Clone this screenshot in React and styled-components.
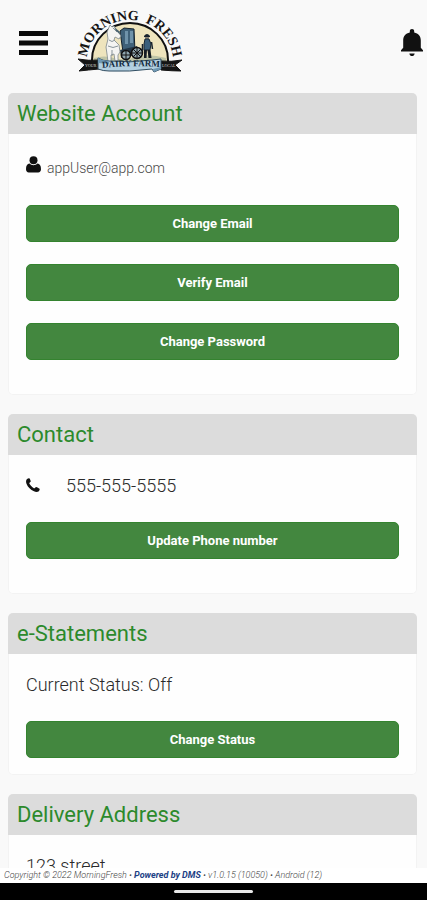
import React from 'react'
import styled, { createGlobalStyle } from 'styled-components'

const GlobalStyle = createGlobalStyle`
* {
    box-sizing: border-box;
}
body {
    margin: 0;
    background: #f9f9f9;
    font-family: Roboto, "Liberation Sans", sans-serif;
    color: #2a2a2a;
}
`;

const Screen = styled.div`
display: flex;
flex-direction: column;
height: 100vh;
overflow: hidden;
`;

const Header = styled.header`
display: flex;
align-items: center;
flex: none;
height: 86px;
padding: 0 2px 0 19px;
`;

const IconButton = styled.button`
display: flex;
padding: 0;
border: none;
background: none;
cursor: pointer;
`;

const LogoLink = styled.a`
display: flex;
margin-left: 29px;
margin-right: auto;
`;

const Main = styled.main`
display: flex;
flex-direction: column;
flex: 1;
gap: 19px;
min-height: 0;
padding: 7px 10px 0 8px;
overflow: hidden;
`;

const Card = styled.section`
flex: none;
border-radius: 5px;
background: #fefefe;
box-shadow: inset 0 0 0 1px #f3f3f3;
overflow: hidden;
`;

const CardTitle = styled.h2`
margin: 0;
padding: 0 9px;
background: #dcdcdc;
color: #2c8a2c;
font-size: 22px;
font-weight: 400;
line-height: 41px;
`;

const CardBody = styled.div`
display: flex;
flex-direction: column;
gap: 22px;
padding: 17px 18px ${props => props.$bottom || 17}px;
`;

const Row = styled.div`
display: flex;
align-items: baseline;
gap: ${props => props.$gap || 0}px;
height: 28px;
font-size: 18px;
font-weight: 300;
line-height: 28px;
`;

const EmailRow = styled(Row)`
height: 32px;
color: #4a4a4a;
font-size: 14px;
line-height: 34px;
`;

const Button = styled.button`
height: 37px;
border: 1px solid #34832f;
border-radius: 5px;
background: #43873f;
color: #fff;
font-family: inherit;
font-size: 13px;
font-weight: 700;
cursor: pointer;
`;

const Footer = styled.footer`
flex: none;
padding-left: 4px;
background: #fff;
color: #444;
font-size: 9px;
font-style: italic;
font-weight: 300;
line-height: 15px;
`;

const FooterLink = styled.a`
color: #1c3f85;
font-weight: 700;
text-decoration: none;
`;

const SystemBar = styled.div`
display: flex;
align-items: center;
justify-content: center;
flex: none;
height: 17px;
background: #000;
`;

const Pill = styled.div`
width: 79px;
height: 3px;
border-radius: 2px;
background: #e8e8e8;
`;

const MenuIcon = () => (
    <svg width="29" height="26" viewBox="0 0 29 26" aria-hidden="true">
        <path d="M0 1h29v5H0zM0 10.500h29v5H0zM0 20h29v5H0z" fill="#0a0a0a" />
    </svg>
)

const BellIcon = () => (
    <svg width="26" height="28" viewBox="0 0 26 28" aria-hidden="true">
        <path d="M13 0c1.300 0 2.200.9 2.200 2.200v1.200c4.200.8 6.600 3.800 6.600 8v7.400l2.200 2.400v1.400H2v-1.400l2.200-2.400v-7.400c0-4.200 2.400-7.200 6.600-8V2.200C10.800.9 11.700 0 13 0z" fill="#111" />
        <path d="M10.400 24.400h5.200c0 1.500-1.100 2.600-2.600 2.600s-2.600-1.100-2.600-2.600z" fill="#111" />
    </svg>
)

const UserIcon = () => (
    <svg width="15" height="17" viewBox="0 0 15 17" aria-hidden="true">
        <circle cx="7.500" cy="4.200" r="4" fill="#111" />
        <path d="M3.600 7.600c1 1 2.400 1.600 3.900 1.600s2.900-.6 3.900-1.600c2.500.2 3.600 2.300 3.600 5.600 0 2-1.100 3.200-2.800 3.200H2.800C1.100 16.400 0 15.200 0 13.200c0-3.300 1.100-5.400 3.600-5.600z" fill="#111" />
    </svg>
)

const PhoneIcon = () => (
    <svg width="14" height="14" viewBox="0 0 14 14" aria-hidden="true">
        <path d="M.8 1.200C1.600.4 2.700 0 3.300.2c.5.300 1.500 2.600 1.500 3.100 0 .7-1.500 1.300-1.500 2 0 .9 3.100 4.300 4.600 4.900.8.300 1.500-1.300 2.200-1.300.6 0 3.300 1.500 3.500 1.900.3.800-.4 2.200-1.100 2.700-1.300.8-2.900.6-5.100-.5C4.300 11.500 1.800 8.900.6 5.900-.2 3.900-.1 2.200.8 1.200z" fill="#111" />
    </svg>
)

const Logo = () => (
    <svg width="108" height="66" viewBox="0 0 108 66" overflow="visible" role="img" aria-label="Morning Fresh Dairy Farm">
        <defs>
            <path id="arc" d="M10 51A43 41 0 0 1 96 51" />
            <path id="ribbon" d="M23 58Q54 55 85 57" />
        </defs>
        <path d="M15 54V50A38 37 0 0 1 91 50V54z" fill="#eee4bd" stroke="#111" strokeWidth="2" />
        <path d="M17 48q10-3 20 0t22-1 30 1v6H17z" fill="#bfc4a6" />
        {/* milk wagon */}
        <path d="M43 21l4-3 10 1 1 23H46z" fill="#3f6179" stroke="#14222d" />
        <path d="M48 21h3v13h-3zM53 21h3v12h-3z" fill="#6f93aa" />
        <path d="M43 40l17-4 3 8-19 4z" fill="#243746" />
        <circle cx="49" cy="45" r="4.500" fill="#8fa6af" stroke="#111" strokeWidth="1.500" />
        <circle cx="60" cy="43" r="5.500" fill="#8fa6af" stroke="#111" strokeWidth="1.500" />
        <path d="M49 41v8M45 45h8M60 38v10M55 43h10M56 39l8 8M64 39l-8 8" stroke="#111" />
        {/* horse */}
        <path d="M33 15l2 2 2-1 2 3 5 7-2 3-4-2-1 3 5 5 1 7-2 3v6h-3l-1-7-3 1v7h-3l-1-8-1-7 2-8-1-7z" fill="#f4f4f2" stroke="#7c878b" strokeWidth="0.800" />
        <path d="M36 18l4 4M32 30q3 3 6 0M31 36q5 3 10 0M35 40v6" fill="none" stroke="#88949a" />
        <path d="M37 17l5 4 2 4-5-4z" fill="#4b6472" />
        {/* milkman */}
        <circle cx="70" cy="27" r="2.300" fill="#8d8578" />
        <path d="M67 26q3-4 6 0v1h-6z" fill="#18232d" />
        <path d="M68 29h4l2 5-1 6h-6v-6z" fill="#3a5f7c" stroke="#172632" />
        <path d="M67 40h3l-.5 8H67zM70.500 40h3l1 8h-3z" fill="#151c22" />
        <path d="M65.500 34v7M74.500 32l1 7" stroke="#18232d" strokeWidth="1.500" />
        {/* ribbon */}
        <path d="M1 49q11 2 21 1v9q-11 1-20 2l6-6zM105 50q-11 2-21 1v9q12 1 20 1l-6-6z" fill="#151515" stroke="#151515" strokeLinejoin="round" />
        <path d="M21 48q5 3 11 3 22 2 43-1l9-1v10l-7 3-2-3q-23 3-43 2-6 0-11-2z" fill="#b3d0e1" stroke="#314d61" />
        <path d="M21 48q5 3 11 3v3l-11-1zM76 59l8-2v2l-7 3z" fill="#6f98b3" />
        <text fontFamily="Liberation Serif, serif" fontSize="14" fontWeight="700" fill="#151515">
            <textPath href="#arc" startOffset="50%" textAnchor="middle">{'MORNING\u00a0\u00a0FRESH'}</textPath>
        </text>
        <text fontFamily="Liberation Serif, serif" fontSize="9" fontWeight="700" fill="#142b40">
            <textPath href="#ribbon" startOffset="50%" textAnchor="middle">DAIRY FARM</textPath>
        </text>
        <text x="8" y="57" fontFamily="Liberation Serif, serif" fontSize="4" fill="#ddd">YOUR</text>
        <text x="85" y="57" fontFamily="Liberation Serif, serif" fontSize="4" fill="#ddd">LOCAL</text>
    </svg>
)

const App = () => {
    return (
        <Screen>
            <GlobalStyle />
            <Header>
                <IconButton type="button" aria-label="Menu"><MenuIcon /></IconButton>
                <LogoLink href="#"><Logo /></LogoLink>
                <IconButton type="button" aria-label="Notifications"><BellIcon /></IconButton>
            </Header>
            <Main>
                <Card>
                    <CardTitle>Website Account</CardTitle>
                    <CardBody $bottom={35}>
                        <EmailRow $gap={6}>
                            <UserIcon />
                            <span>appUser@app.com</span>
                        </EmailRow>
                        <Button type="button">Change Email</Button>
                        <Button type="button">Verify Email</Button>
                        <Button type="button">Change Password</Button>
                    </CardBody>
                </Card>
                <Card>
                    <CardTitle>Contact</CardTitle>
                    <CardBody $bottom={35}>
                        <Row $gap={26}>
                            <PhoneIcon />
                            <span>555-555-5555</span>
                        </Row>
                        <Button type="button">Update Phone number</Button>
                    </CardBody>
                </Card>
                <Card>
                    <CardTitle>e-Statements</CardTitle>
                    <CardBody>
                        <Row>Current Status: Off</Row>
                        <Button type="button">Change Status</Button>
                    </CardBody>
                </Card>
                <Card>
                    <CardTitle>Delivery Address</CardTitle>
                    <CardBody>
                        <Row>123 street</Row>
                    </CardBody>
                </Card>
            </Main>
            <Footer>
                Copyright © 2022 MorningFresh • <FooterLink href="#">Powered by DMS</FooterLink> • v1.0.15 (10050) • Android (12)
            </Footer>
            <SystemBar><Pill /></SystemBar>
        </Screen>
    )
}

export default App;
